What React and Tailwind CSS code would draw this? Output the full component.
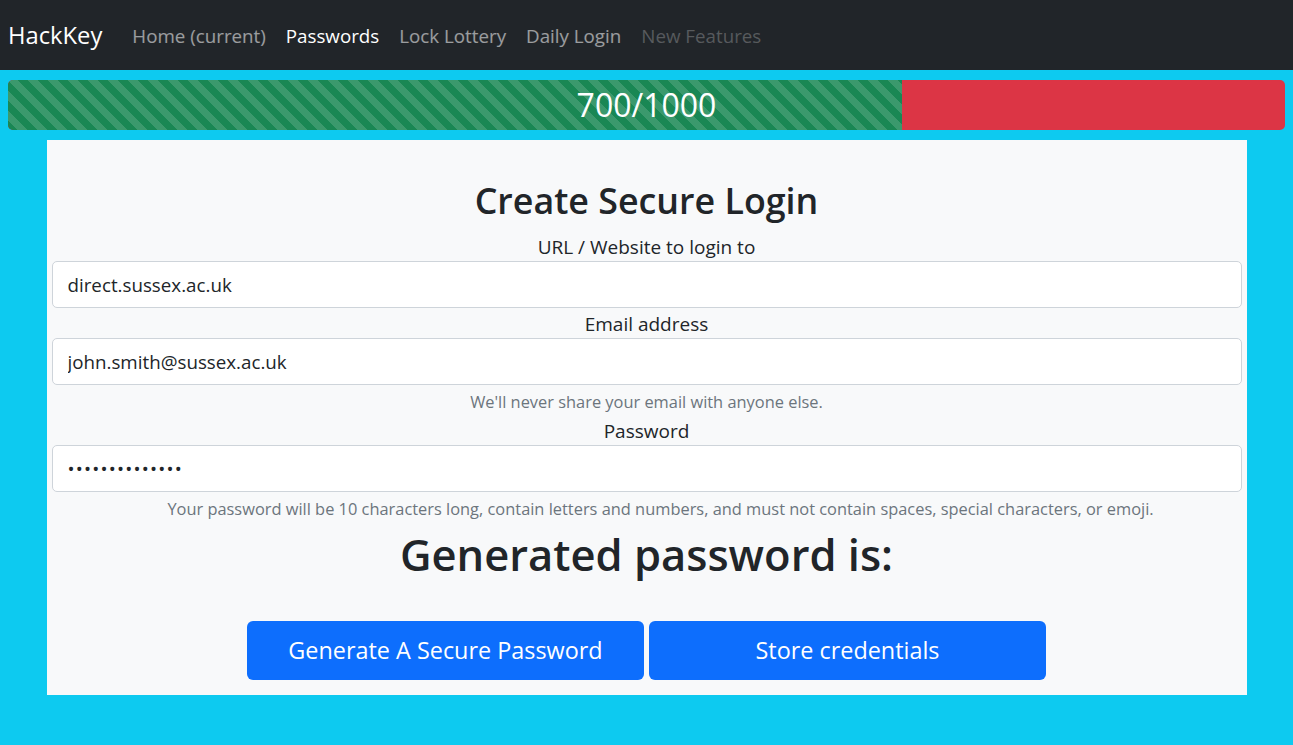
import React from "react";

const links = [
  { label: "Home (current)", cls: "text-white/55" },
  { label: "Passwords", cls: "text-white" },
  { label: "Lock Lottery", cls: "text-white/55" },
  { label: "Daily Login", cls: "text-white/55" },
  { label: "New Features", cls: "text-white/25" },
];

const Field = ({ label, value, type = "text", help, helpCls = "" }) => (
  <div>
    <label className="block h-[30px] pt-[1px] text-[19px] leading-[30px] text-[#212529]">{label}</label>
    <input
      type={type}
      readOnly
      value={value}
      className={`block h-[47px] w-full rounded-[5px] border border-[#ced4da] bg-white px-[15px] text-left text-[18.75px] text-[#212529] outline-none ${
        type === "password" ? "tracking-[1.2px]" : ""
      }`}
    />
    {help && (
      <p className={`mt-[4px] h-[26px] text-[16.4px] leading-[26px] text-[#6c757d] ${helpCls}`}>{help}</p>
    )}
  </div>
);

export default function App() {
  return (
    <div className="min-h-screen bg-[#0dcaf0] font-['Open_Sans',sans-serif]">
      {/* navbar */}
      <nav className="flex h-[70px] items-center bg-[#212529] px-2 pt-[2px]">
        <span className="mr-5 text-[23.75px] text-white">HackKey</span>
        <ul className="flex">
          {links.map((l) => (
            <li key={l.label} className={`px-[10px] text-[18.75px] ${l.cls}`}>
              {l.label}
            </li>
          ))}
        </ul>
      </nav>

      {/* progress */}
      <div className="px-2 pt-[10px]">
        <div className="relative flex h-[50px] overflow-hidden rounded-[5px] bg-[#dc3545]">
          <div className="w-[70%] bg-[#198754] bg-[linear-gradient(45deg,rgba(255,255,255,.15)_25%,transparent_25%,transparent_50%,rgba(255,255,255,.15)_50%,rgba(255,255,255,.15)_75%,transparent_75%,transparent)] bg-[length:20px_20px]" />
          <div className="absolute inset-0 flex items-center justify-center text-[32px] text-white">700/1000</div>
        </div>
      </div>

      {/* card */}
      <div className="mx-auto mt-[10px] w-[1200px] bg-[#f8f9fa] px-[5px] pt-[39px] pb-[15px] text-center">
        <h3 className="mb-[10px] text-[35.8px] font-semibold leading-[42px] text-[#212529]">Create Secure Login</h3>
        <Field label="URL / Website to login to" value="direct.sussex.ac.uk" />
        <Field
          label="Email address"
          value="john.smith@sussex.ac.uk"
          help="We'll never share your email with anyone else."
        />
        <Field
          label="Password"
          type="password"
          value="abcdefghijklmn"
          helpCls="pl-[28px]"
          help="Your password will be 10 characters long, contain letters and numbers, and must not contain spaces, special characters, or emoji."
        />
        <h1 className="mt-[3px] text-[43.5px] font-semibold leading-[60px] text-[#212529]">Generated password is:</h1>
        <div className="mt-[36px] flex justify-center gap-[5px]">
          <button className="h-[59px] w-[397px] rounded-[6px] bg-[#0d6efd] text-[23.4px] text-white">
            Generate A Secure Password
          </button>
          <button className="h-[59px] w-[397px] rounded-[6px] bg-[#0d6efd] text-[23.4px] text-white">
            Store credentials
          </button>
        </div>
      </div>
    </div>
  );
}
